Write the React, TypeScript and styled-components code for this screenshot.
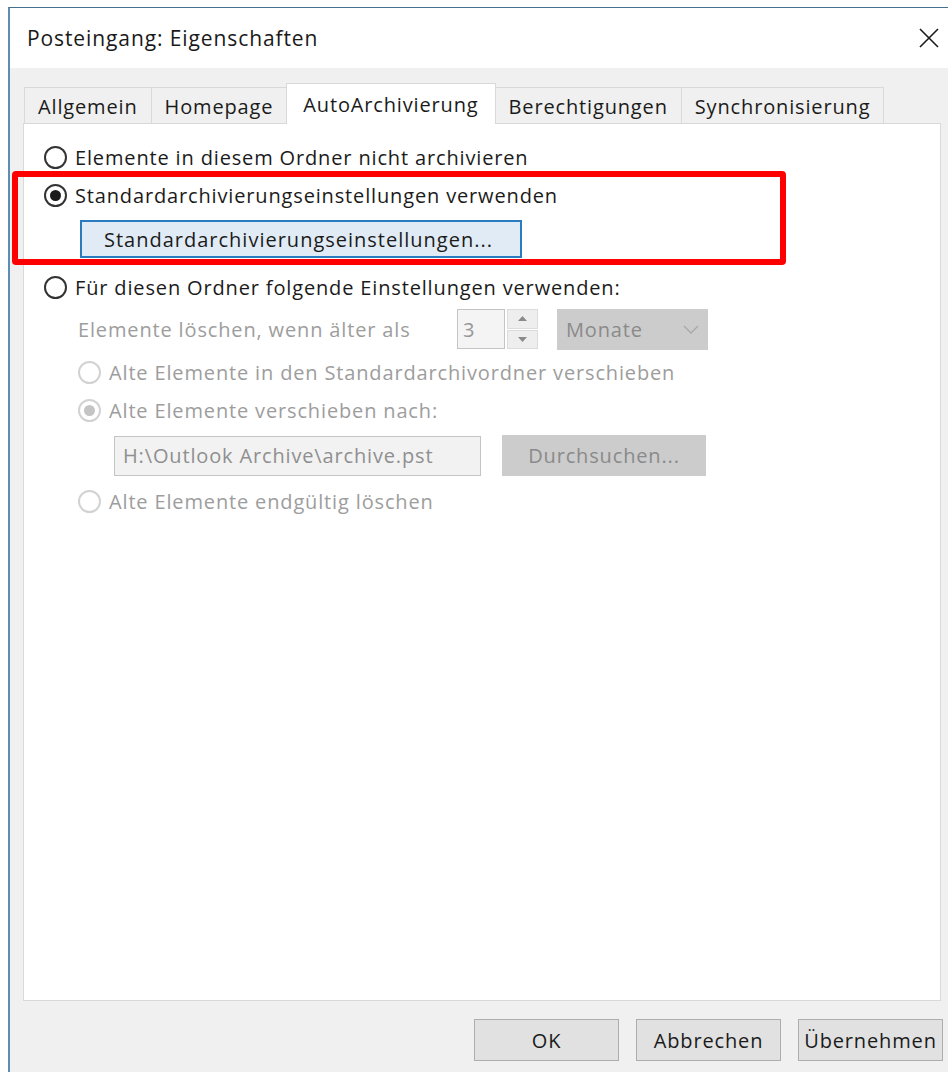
import React, { useState } from 'react';
import styled, { createGlobalStyle, css } from 'styled-components';

const GlobalStyle = createGlobalStyle`
  html, body {
    margin: 0;
    padding: 0;
    background: #ffffff;
    overflow: hidden;
  }
  body {
    font-family: 'Open Sans', 'Noto Sans', sans-serif;
    font-size: 20px;
    letter-spacing: 0.85px;
    color: #1b1b1b;
  }
`;

const Window = styled.div`
  margin: 7px 0 0 8px;
  width: 952px;
  height: 1070px;
  box-sizing: border-box;
  border-left: 2px solid #5d8db3;
  border-top: 1px solid #46708f;
  display: flex;
  flex-direction: column;
  background: #f0f0f0;
`;

const TitleBar = styled.div`
  height: 60px;
  flex: none;
  background: #ffffff;
  display: flex;
  align-items: center;
  justify-content: space-between;
  padding: 0 21px 0 17px;
  font-size: 21px;
  letter-spacing: 0.9px;
  color: #1a1a1a;
`;

const CloseButton = styled.button`
  border: none;
  background: transparent;
  padding: 0;
  width: 20px;
  height: 20px;
  display: flex;
  align-items: center;
  justify-content: center;
  cursor: pointer;
`;

const Body = styled.div`
  flex: 1;
  display: flex;
  flex-direction: column;
  padding: 15px 19px 0 13px;
`;

const TabStrip = styled.div`
  display: flex;
  align-items: flex-end;
  padding-left: 2px;
  position: relative;
  z-index: 1;
`;

const Tab = styled.div<{ $active?: boolean }>`
  height: 36px;
  box-sizing: border-box;
  display: flex;
  align-items: center;
  padding: 2px 13px 0;
  background: #f0f0f0;
  border: 1px solid #d9d9d9;
  border-bottom: none;
  margin-left: -1px;
  cursor: default;

  ${(p) =>
    p.$active &&
    css`
      height: 41px;
      margin-bottom: -1px;
      background: #ffffff;
      padding: 0 16px;
    `}
`;

const Panel = styled.div`
  height: 878px;
  box-sizing: border-box;
  background: #ffffff;
  border: 1px solid #d9d9d9;
  padding: 14px 20px 0 20px;
  display: flex;
  flex-direction: column;
`;

const RadioRow = styled.label<{ $disabled?: boolean }>`
  height: 38px;
  display: flex;
  align-items: center;
  gap: 8px;
  white-space: nowrap;
  color: ${(p) => (p.$disabled ? '#9d9d9d' : '#1b1b1b')};
`;

const RadioDot = styled.span<{ $checked?: boolean; $disabled?: boolean }>`
  width: 23px;
  height: 23px;
  box-sizing: border-box;
  border-radius: 50%;
  border: 2px solid ${(p) => (p.$disabled ? '#d2d2d2' : '#333333')};
  background: #ffffff;
  display: flex;
  align-items: center;
  justify-content: center;
  flex: none;

  &::after {
    content: '';
    width: 11px;
    height: 11px;
    border-radius: 50%;
    background: ${(p) => (p.$disabled ? '#c4c4c4' : '#1b1b1b')};
    display: ${(p) => (p.$checked ? 'block' : 'none')};
  }
`;

const Highlight = styled.div`
  position: relative;
  display: flex;
  flex-direction: column;

  &::after {
    content: '';
    position: absolute;
    left: -32px;
    top: -5px;
    width: 774px;
    height: 94px;
    box-sizing: border-box;
    border: 6px solid #ff0000;
    border-radius: 4px;
    pointer-events: none;
  }
`;

const DefaultsButton = styled.button`
  align-self: flex-start;
  margin: 6px 0 0 36px;
  width: 442px;
  height: 38px;
  box-sizing: border-box;
  border: 2px solid #2b7cbf;
  background: #e1ebf5;
  font-family: inherit;
  font-size: inherit;
  letter-spacing: 1px;
  color: #1b1b1b;
  text-align: left;
  padding: 0 0 0 22px;
  white-space: nowrap;
`;

const Gap = styled.div<{ $h: number }>`
  height: ${(p) => p.$h}px;
  flex: none;
`;

const Indented = styled.div`
  display: flex;
  flex-direction: column;
  padding-left: 34px;
`;

const AgeRow = styled.div`
  height: 40px;
  display: flex;
  align-items: center;
  color: #9d9d9d;
`;

const AgeLabel = styled.span`
  width: 379px;
  white-space: nowrap;
`;

const NumberBox = styled.div`
  width: 48px;
  height: 40px;
  box-sizing: border-box;
  border: 1px solid #c4c4c4;
  background: #f4f4f4;
  padding-left: 5px;
  display: flex;
  align-items: center;
  color: #969696;
`;

const Spinner = styled.div`
  margin-left: 2px;
  width: 31px;
  height: 40px;
  display: flex;
  flex-direction: column;
  gap: 1px;
`;

const SpinHalf = styled.div`
  flex: 1;
  background: #eeeeee;
  border: 1px solid #dcdcdc;
  display: flex;
  align-items: center;
  justify-content: center;
`;

const Dropdown = styled.div`
  margin-left: 19px;
  width: 151px;
  height: 41px;
  box-sizing: border-box;
  background: #cccccc;
  display: flex;
  align-items: center;
  justify-content: space-between;
  padding: 0 9px 0 9px;
  color: #8a8a8a;
`;

const PathRow = styled.div`
  display: flex;
  align-items: center;
  padding-left: 36px;
  margin-top: 6px;
`;

const PathField = styled.div`
  width: 367px;
  height: 40px;
  box-sizing: border-box;
  border: 1px solid #c4c4c4;
  background: #f2f2f2;
  padding-left: 8px;
  display: flex;
  align-items: center;
  white-space: nowrap;
  color: #8f8f8f;
`;

const GreyButton = styled.div`
  margin-left: 21px;
  width: 204px;
  height: 41px;
  background: #cccccc;
  display: flex;
  align-items: center;
  justify-content: center;
  color: #8a8a8a;
`;

const Footer = styled.div`
  display: flex;
  justify-content: flex-end;
  gap: 17px;
  margin: 18px -2px 0 0;
`;

const DialogButton = styled.button`
  width: 145px;
  height: 42px;
  box-sizing: border-box;
  background: #e1e1e1;
  border: 1px solid #adadad;
  font-family: inherit;
  font-size: inherit;
  letter-spacing: inherit;
  color: #1b1b1b;
  padding: 0;
`;

const tabs = ['Allgemein', 'Homepage', 'AutoArchivierung', 'Berechtigungen', 'Synchronisierung'];

const Radio = ({
  label,
  checked,
  disabled,
  onSelect,
}: {
  label: string;
  checked?: boolean;
  disabled?: boolean;
  onSelect?: () => void;
}) => (
  <RadioRow $disabled={disabled} onClick={disabled ? undefined : onSelect}>
    <RadioDot $checked={checked} $disabled={disabled} />
    {label}
  </RadioRow>
);

const App = () => {
  const [mode, setMode] = useState('default');

  return (
    <>
      <GlobalStyle />
      <Window>
        <TitleBar>
          <span>Posteingang: Eigenschaften</span>
          <CloseButton aria-label="Schließen">
            <svg width="20" height="20" viewBox="0 0 20 20">
              <path d="M1 1 L19 19 M19 1 L1 19" stroke="#1a1a1a" strokeWidth="1.6" />
            </svg>
          </CloseButton>
        </TitleBar>
        <Body>
          <TabStrip>
            {tabs.map((t) => (
              <Tab key={t} $active={t === 'AutoArchivierung'}>
                {t}
              </Tab>
            ))}
          </TabStrip>
          <Panel>
            <Radio
              label="Elemente in diesem Ordner nicht archivieren"
              checked={mode === 'none'}
              onSelect={() => setMode('none')}
            />
            <Highlight>
              <Radio
                label="Standardarchivierungseinstellungen verwenden"
                checked={mode === 'default'}
                onSelect={() => setMode('default')}
              />
              <DefaultsButton>Standardarchivierungseinstellungen...</DefaultsButton>
            </Highlight>
            <Gap $h={10} />
            <Radio
              label="Für diesen Ordner folgende Einstellungen verwenden:"
              checked={mode === 'custom'}
              onSelect={() => setMode('custom')}
            />
            <Gap $h={3} />
            <Indented>
              <AgeRow>
                <AgeLabel>Elemente löschen, wenn älter als</AgeLabel>
                <NumberBox>3</NumberBox>
                <Spinner>
                  <SpinHalf>
                    <svg width="9" height="5" viewBox="0 0 9 5">
                      <path d="M0 5 L4.5 0 L9 5 Z" fill="#8a8a8a" />
                    </svg>
                  </SpinHalf>
                  <SpinHalf>
                    <svg width="9" height="5" viewBox="0 0 9 5">
                      <path d="M0 0 L4.5 5 L9 0 Z" fill="#8a8a8a" />
                    </svg>
                  </SpinHalf>
                </Spinner>
                <Dropdown>
                  Monate
                  <svg width="16" height="9" viewBox="0 0 16 9">
                    <path d="M1 1 L8 8 L15 1" stroke="#a8a8a8" strokeWidth="1.3" fill="none" />
                  </svg>
                </Dropdown>
              </AgeRow>
              <Gap $h={4} />
              <Radio label="Alte Elemente in den Standardarchivordner verschieben" disabled />
              <Radio label="Alte Elemente verschieben nach:" checked disabled />
              <PathRow>
                <PathField>H:\Outlook Archive\archive.pst</PathField>
                <GreyButton>Durchsuchen...</GreyButton>
              </PathRow>
              <Gap $h={6} />
              <Radio label="Alte Elemente endgültig löschen" disabled />
            </Indented>
          </Panel>
          <Footer>
            <DialogButton>OK</DialogButton>
            <DialogButton>Abbrechen</DialogButton>
            <DialogButton>Übernehmen</DialogButton>
          </Footer>
        </Body>
      </Window>
    </>
  );
};

export default App;
